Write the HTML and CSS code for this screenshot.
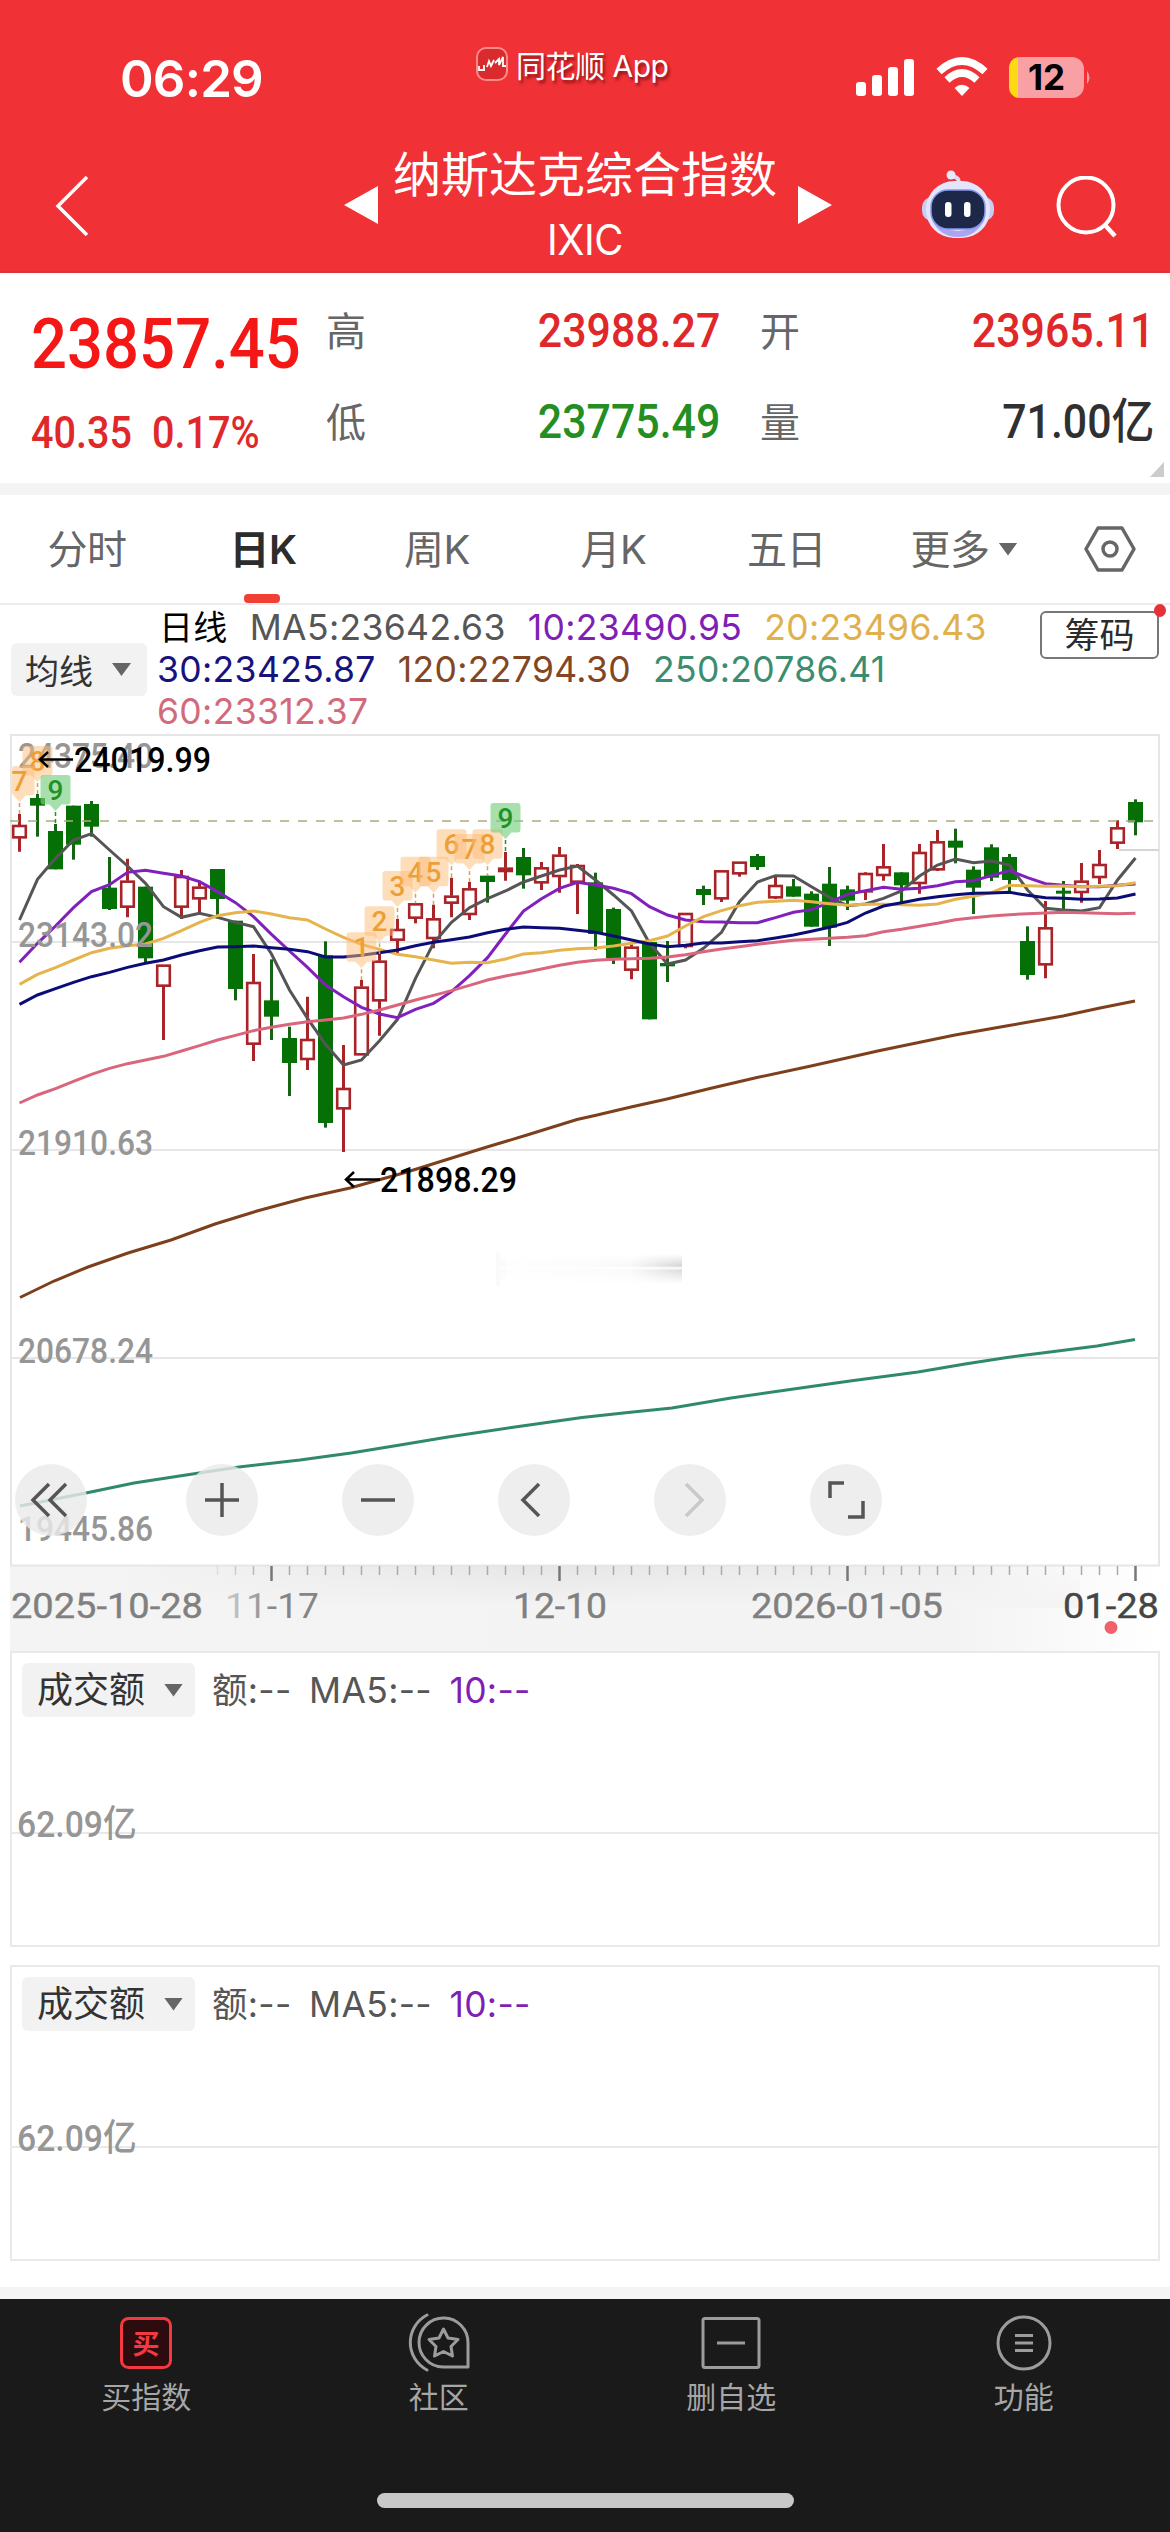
FILE: index.html
```html
<!DOCTYPE html>
<html lang="zh-CN">
<head>
<meta charset="utf-8">
<title>纳斯达克综合指数</title>
<link rel="stylesheet" href="styles.css">
</head>
<body>
<header class="top">
  <div class="status">
    <span class="time">06:29</span>
    <span class="app-tag">
      <svg width="32" height="34" viewBox="0 0 32 34"><rect x="1" y="1" width="30" height="32" rx="9" fill="#d92a2e" stroke="#ff8a8a" stroke-width="2"/><path d="M3 19v4h5v-5M11 20l2-6 2 5 3-6M19 16l4-4v6l4-8v9h3" fill="none" stroke="#fff" stroke-width="1.8"/></svg>
      <span>同花顺 App</span>
    </span>
    <svg class="status-icons" width="240" height="44" viewBox="0 0 240 44">
      <g fill="#fff"><rect x="0" y="26" width="10" height="14" rx="3"/><rect x="16" y="19" width="10" height="21" rx="3"/><rect x="32" y="11" width="10" height="29" rx="3"/><rect x="48" y="3" width="10" height="37" rx="3"/></g>
      <g fill="none" stroke="#fff" stroke-width="7.5"><path d="M83 15.500Q106 -5.500 129 15.500"/><path d="M91 24Q106 10 121 24"/></g>
      <path d="M98.500 32Q106 25.500 113.500 32L106 40Z" fill="#fff"/>
      <rect x="153" y="1" width="75" height="41" rx="12" fill="#f8a0a4"/>
      <path d="M162 1v41Q153 40 153 30V13Q153 3 162 1Z" fill="#fbd914"/>
      <path d="M231 15q5 6.500 0 13z" fill="#f8a0a4"/>
      <text x="190.500" y="34" text-anchor="middle" class="battery">12</text>
    </svg>
  </div>
  <div class="titlebar">
    <svg class="back" width="36" height="62" viewBox="0 0 36 62"><path d="M33 2L4 31L33 60" fill="none" stroke="#fff" stroke-width="3.500"/></svg>
    <div class="switcher">
      <svg width="34" height="38" viewBox="0 0 34 38"><path d="M34 0V38L0 19Z" fill="#fff"/></svg>
      <div class="names"><h1>纳斯达克综合指数</h1><span>IXIC</span></div>
      <svg width="34" height="38" viewBox="0 0 34 38"><path d="M0 0V38L34 19Z" fill="#fff"/></svg>
    </div>
    <svg class="robot" width="76" height="70" viewBox="0 0 76 70">
      <path d="M38 15Q41 7 31 6" fill="none" stroke="#d9dcf5" stroke-width="4"/><circle cx="31" cy="5" r="4.500" fill="#e8eaf8"/>
      <rect x="2" y="27" width="72" height="24" rx="10" fill="#c9cdf0"/>
      <rect x="6" y="11" width="64" height="57" rx="28" fill="#e3e5fa"/>
      <path d="M12 50Q20 67 38 67T65 49Q50 61 38 61T12 50Z" fill="#aaa5f0"/>
      <rect x="11" y="20" width="54" height="39" rx="17" fill="#1d2747" stroke="#8497ee" stroke-width="1.500"/>
      <rect x="25" y="32" width="6.500" height="15" rx="3" fill="#fff"/><rect x="44" y="32" width="6.500" height="15" rx="3" fill="#fff"/>
    </svg>
    <svg class="search" width="62" height="62" viewBox="0 0 62 62"><circle cx="30" cy="29" r="27.500" fill="none" stroke="#fff" stroke-width="4"/><path d="M48 48L59 60" stroke="#fff" stroke-width="4.500"/></svg>
  </div>
</header>

<section class="quote">
  <div class="last">
    <span class="num big">23857.45</span>
    <span class="chg"><span class="num">40.35</span><span class="num pct">0.17%</span></span>
  </div>
  <dl class="stats">
    <div><dt>高</dt><dd class="num red">23988.27</dd></div>
    <div><dt>开</dt><dd class="num red">23965.11</dd></div>
    <div><dt>低</dt><dd class="num green">23775.49</dd></div>
    <div><dt>量</dt><dd class="num dark">71.00亿</dd></div>
  </dl>
  <i class="corner"></i>
</section>

<nav class="tabs">
  <a>分时</a><a class="on">日K</a><a>周K</a><a>月K</a><a>五日</a>
  <a class="more">更多<i class="caret"></i></a>
  <svg width="52" height="46" viewBox="0 0 52 46"><path d="M14 2H38L50 23L38 44H14L2 23Z" fill="none" stroke="#666" stroke-width="3.500" stroke-linejoin="round"/><circle cx="26" cy="23" r="7" fill="none" stroke="#666" stroke-width="3.500"/></svg>
</nav>

<section class="legend">
  <button class="pick">均线<i class="caret"></i></button>
  <div class="ma">
    <p><b>日线</b><span class="c5">MA5:23642.63</span><span class="c10">10:23490.95</span><span class="c20">20:23496.43</span></p>
    <p><span class="c30">30:23425.87</span><span class="c120">120:22794.30</span><span class="c250">250:20786.41</span></p>
    <p><span class="c60">60:23312.37</span></p>
  </div>
  <button class="chips">筹码<i class="dot"></i></button>
</section>

<section class="chart">
  <svg id="plot" width="1170" height="917" viewBox="0 734 1170 917">
    <defs>
      <linearGradient id="band" x1="0" x2="1"><stop offset="0" stop-color="#f4f4f4"/><stop offset=".82" stop-color="#f3f3f3"/><stop offset="1" stop-color="#fff"/></linearGradient>
      <linearGradient id="bandTop" x1="0" x2="1"><stop offset="0" stop-color="#e6e6e6" stop-opacity="0"/><stop offset=".45" stop-color="#e6e6e6"/><stop offset="1" stop-color="#e6e6e6" stop-opacity="0"/></linearGradient>
      <linearGradient id="bandFade" x1="0" x2="0" y1="0" y2="1"><stop offset="0" stop-color="#f3f3f3" stop-opacity="0"/><stop offset="1" stop-color="#f4f4f4"/></linearGradient>
      <linearGradient id="smudge" x1="0" x2="1"><stop offset="0" stop-color="#888" stop-opacity=".01"/><stop offset=".7" stop-color="#888" stop-opacity=".05"/><stop offset="1" stop-color="#777" stop-opacity=".32"/></linearGradient>
      <linearGradient id="fade" x1="0" x2="0" y1="0" y2="1"><stop offset="0" stop-color="#fff"/><stop offset=".15" stop-color="#fff"/><stop offset=".45" stop-color="#fff" stop-opacity="0"/><stop offset=".5" stop-color="#fff"/><stop offset=".56" stop-color="#fff" stop-opacity=".2"/><stop offset=".9" stop-color="#fff"/><stop offset="1" stop-color="#fff"/></linearGradient>
      <linearGradient id="dateFade" gradientUnits="userSpaceOnUse" x1="226" x2="275" y1="0" y2="0"><stop offset="0" stop-color="#ccc"/><stop offset="1" stop-color="#858585"/></linearGradient>
    </defs>
    <rect x="10" y="1566" width="1150" height="85" fill="url(#band)"/>
    <rect x="120" y="1566" width="960" height="42" fill="url(#bandTop)"/>
    <rect x="120" y="1566" width="960" height="42" fill="url(#bandFade)"/>
    <g fill="none" stroke="#e6e6e6" stroke-width="2"><path d="M11 942H1159M11 1150H1159M11 1358H1159"/><rect x="11" y="735" width="1148" height="830.500"/></g>
    <path d="M1119 850H1159" stroke="#d5d5d5" stroke-width="2"/>
    <g id="series"></g>
    <g class="axis">
      <text x="18" y="768" textLength="135">24375.40</text><text x="18" y="946.500" textLength="135">23143.02</text>
      <text x="18" y="1154.500" textLength="135">21910.63</text><text x="18" y="1363" textLength="135">20678.24</text><text x="18" y="1541" textLength="135">19445.86</text>
    </g>
    <path d="M10 821H1158" stroke="#a9ad7d" stroke-width="1.500" stroke-dasharray="9 9"/>
    <g id="marks"></g>
    <g class="extreme"><text x="74" y="772" textLength="137">24019.99</text><text x="380" y="1191.500" textLength="137">21898.29</text></g>
    <g fill="none" stroke="#000" stroke-width="2.500"><path d="M73 759.500H40M48 752L40 759.500L48 767M380 1179.500H346M354 1172L346 1179.500L354 1187"/></g>
    <rect x="496" y="1252" width="10" height="34" fill="#fafafa"/><rect x="505" y="1250" width="177" height="36" fill="url(#smudge)"/><rect x="500" y="1248" width="184" height="40" fill="url(#fade)"/>
    <g id="ticks"></g>
    <g class="dates">
      <text x="11" y="1618" textLength="192">2025-10-28</text><text x="225" y="1618" textLength="94" class="faded">11-17</text><text x="513" y="1618" textLength="94">12-10</text><text x="751" y="1618" textLength="192">2026-01-05</text><text x="1063" y="1618" textLength="96" class="now">01-28</text>
    </g>
    <circle cx="1111" cy="1627.500" r="6.500" fill="#f0616a"/>
  </svg>
  <div class="tools">
    <svg viewBox="0 0 72 72"><path d="M34 20L18 36L34 52M51 20L35 36L51 52"/></svg>
    <svg viewBox="0 0 72 72"><path d="M36 19V53M19 36H53"/></svg>
    <svg viewBox="0 0 72 72"><path d="M19 36H53"/></svg>
    <svg viewBox="0 0 72 72"><path d="M41 20L25 36L41 52"/></svg>
    <svg viewBox="0 0 72 72" class="off"><path d="M32 20L48 36L32 52"/></svg>
    <svg viewBox="0 0 72 72"><path d="M34 19H20V34M38 53H53V37"/></svg>
  </div>
</section>

<section class="volume">
  <div class="vol-head"><button class="pick">成交额<i class="caret"></i></button><span class="c5">额:--</span><span class="c5">MA5:--</span><span class="c10">10:--</span></div>
  <div class="mid"><span class="num">62.09亿</span></div>
</section>
<section class="volume">
  <div class="vol-head"><button class="pick">成交额<i class="caret"></i></button><span class="c5">额:--</span><span class="c5">MA5:--</span><span class="c10">10:--</span></div>
  <div class="mid"><span class="num">62.09亿</span></div>
</section>

<footer class="bottom">
  <div class="items">
    <a><svg viewBox="0 0 64 60"><rect x="7.500" y="5.500" width="49" height="49" rx="7" fill="#2c0c0e" stroke="#f23a40" stroke-width="3"/><text x="32" y="40.500" text-anchor="middle" class="buy">买</text></svg>买指数</a>
    <a><svg viewBox="0 0 64 60"><g fill="none" stroke="#9c9c9c" stroke-width="3" stroke-linejoin="round" stroke-linecap="round"><path d="M20 2A31 31 0 0 0 20 57"/><path d="M61 54H36A24.500 24.500 0 1 1 61 30Z"/><path d="M36.500 16L41 25L51 26.500L44 33.500L45.500 43L36.500 38.500L27.500 43L29 33.500L22 26.500L32 25Z"/></g></svg>社区</a>
    <a><svg viewBox="0 0 64 60"><g fill="none" stroke="#9c9c9c" stroke-width="3"><rect x="4" y="5.500" width="56" height="49" rx="2"/><path d="M18 30H46"/></g></svg>删自选</a>
    <a><svg viewBox="0 0 64 60"><g fill="none" stroke="#9c9c9c" stroke-width="3"><circle cx="32" cy="30" r="26"/><path d="M23 22.500H41M23 30H41M23 37.500H41"/></g></svg>功能</a>
  </div>
  <i class="home"></i>
</footer>
<script src="chart.js"></script>
</body>
</html>
```
FILE: styles.css
```css
* { box-sizing: border-box; }
body { margin: 0; width: 1170px; height: 2532px; overflow: hidden; background: #fff; font-family: Inter, "Noto Sans CJK SC", sans-serif; color: #666; }
h1, p, dl, dd { margin: 0; font-weight: 400; }
button { border: 0; padding: 0; font: inherit; color: #333; }
svg { display: block; flex: none; }
.num { font-family: Roboto, "Noto Sans CJK SC", sans-serif; font-weight: 500; display: inline-block; transform: scaleX(.893); transform-origin: left; white-space: nowrap; }

.top { height: 273px; background: #f03136; color: #fff; border-bottom: 2px solid #dc3338; }
.status { display: flex; height: 140px; padding-left: 120px; }
.time { width: 356px; font-size: 51px; font-weight: 600; line-height: 157px; letter-spacing: -.8px; }
.app-tag { display: flex; gap: 8px; width: 380px; height: 38px; margin-top: 47px; font-size: 30px; line-height: 39px; text-shadow: 2px 3px 3px rgba(80, 0, 0, .6); letter-spacing: -.5px; }
.status-icons { margin-top: 56px; }
.battery { font: 700 35px Inter, sans-serif; fill: #000; }
.titlebar { display: flex; height: 131px; padding-left: 54px; }
.back { margin-top: 35px; }
.switcher { display: flex; gap: 16px; margin-left: 254px; }
.switcher > svg { margin-top: 46px; }
.names { width: 388px; text-align: center; white-space: nowrap; }
.names h1 { font-size: 48px; line-height: 69px; margin-left: -6px; font-weight: 400; }
.names span { display: block; font-size: 42px; line-height: 60px; margin: 1px 6px 0 0; letter-spacing: -.5px; transform: scaleX(.95); }
.robot { margin: 30px 0 0 88px; }
.search { margin: 36px 0 0 60px; }

.quote { position: relative; display: flex; height: 222px; border-bottom: 12px solid #f4f4f4; padding-left: 31px; }
.last { width: 295px; color: #e0282a; }
.big { font-size: 71px; line-height: 84px; margin-top: 29px; color: #f51616; }
.chg { display: flex; margin-top: 23px; font-size: 43.500px; line-height: 50px; height: 50px; }
.chg .num { width: 121px; transform: scaleX(.91); }
.stats { display: grid; grid-template-columns: 394px 392px; column-gap: 40px; grid-auto-rows: 91px; padding-top: 14px; }
.stats div { display: flex; justify-content: space-between; line-height: 91px; }
.stats dt { font-size: 40px; line-height: 90px; }
.stats dd { font-size: 48px; line-height: 88px; transform-origin: right; }
.stats div:nth-child(even) dd { margin-right: -2px; }
.red { color: #e0282a; }
.green { color: #248e22; }
.dark { color: #303030; }
.corner { position: absolute; right: 6px; bottom: 6px; width: 14px; height: 15px; background: #ccc; clip-path: polygon(100% 0, 100% 100%, 0 100%); }

.tabs { display: grid; grid-template-columns: 174px 178px 170px 183px 163px 192px 1fr; align-items: center; height: 110px; border-bottom: 2px solid #ececec; font-size: 40px; text-align: center; }
.tabs a { line-height: 109px; height: 108px; letter-spacing: -.5px; }
.tabs > svg { margin-left: 24px; }
.tabs .on { position: relative; color: #2c2c2c; font-weight: 600; }
.on::after { content: ""; position: absolute; left: 70px; bottom: 0; width: 36px; height: 9px; border-radius: 4px; background: #f04034; }
.tabs .more { display: flex; align-items: center; justify-content: center; gap: 9px; }
.caret { display: inline-block; width: 19px; height: 13px; background: #666; clip-path: polygon(0 0, 100% 0, 50% 100%); }

.legend { display: flex; height: 129px; padding-left: 11px; }
.pick { display: flex; align-items: center; justify-content: space-between; background: #f2f2f2; border-radius: 6px; white-space: nowrap; }
.legend .pick { width: 136px; height: 53px; margin-top: 38px; padding: 0 16px 0 14px; font-size: 34px; }
.ma { width: 893px; padding-left: 10px; font-size: 35.500px; line-height: 42px; }
.ma p { display: flex; gap: 22px; height: 42px; padding-top: 2px; letter-spacing: .35px; white-space: nowrap; }
.ma b { font-size: 34px; font-weight: 400; color: #000; margin-left: 2px; }
.c5 { color: #565656; } .c10 { color: #7f1fb5; } .c20 { color: #e0b04c; } .c30 { color: #16127e; }
.c120 { color: #844622; } .c250 { color: #3c8d70; } .c60 { color: #d26a7c; }
.chips { position: relative; width: 119px; height: 48px; margin-top: 6px; background: #fff; border: 2px solid #777; border-radius: 6px; font-size: 35px; line-height: 42px; color: #2b2b2b; }
.dot { position: absolute; right: -9px; top: -9px; width: 12px; height: 13px; border-radius: 50%; background: #e6303a; }

.chart { position: relative; height: 917px; }
.chart text { font-family: Roboto, sans-serif; font-size: 35px; font-weight: 500; }
.axis text { fill: #969696; }
.extreme text { fill: #000; }
.dates text { fill: #808080; font-weight: 400; stroke: #808080; stroke-width: .4; }
.dates .faded { fill: url(#dateFade); stroke: none; }
.dates .now { fill: #454545; stroke: #454545; }
#marks text { font-size: 28px; }
.tools { position: absolute; left: 15px; top: 730px; display: flex; gap: 84px; }
.tools svg { width: 72px; height: 72px; border-radius: 50%; background: rgba(234, 234, 234, .82); fill: none; stroke: #555; stroke-width: 3.500; }
.tools svg:first-child { margin-right: 15px; }
.tools .off { stroke: #c9c9c9; }

.volume { height: 296px; margin: 0 10px 18px; border: 2px solid #e9e9e9; }
.vol-head { display: flex; height: 64px; padding: 10px 0 0 10px; font-size: 35.500px; line-height: 56px; }
.vol-head span { white-space: nowrap; margin-right: 17.500px; letter-spacing: .3px; }
.vol-head .pick { width: 173px; height: 54px; padding: 0 12px 0 15px; margin-right: 17px; font-size: 36px; }
.mid { height: 117px; border-bottom: 2px solid #e9e9e9; padding: 85px 0 0 5px; font-size: 37px; line-height: 44px; }
.mid .num { position: relative; color: #969696; transform: scaleX(.91); }

.bottom { height: 245px; margin-top: 26px; border-top: 12px solid #f4f4f4; background: #1a1a1a; color: #a6a6a6; }
.items { display: grid; grid-template-columns: repeat(4, 1fr); height: 194px; padding-top: 14px; }
.items a { display: flex; flex-direction: column; align-items: center; font-size: 30px; line-height: 44px; gap: 2px; }
.items svg { width: 64px; height: 60px; }
.buy { font: 700 27px "Noto Sans CJK SC", sans-serif; fill: #f23a40; }
.home { display: block; width: 417px; height: 15px; margin: 0 auto; border-radius: 8px; background: #c8c8c8; }
```
FILE: chart.js
```js
// Vertical values are thirds of a pixel below y = 730.
const X = i => 19.5 + 18 * i;
const Y = v => 730 + v / 3;
const el = (parent, tag, attrs, text) => {
  const n = document.createElementNS('http://www.w3.org/2000/svg', tag);
  for (const k in attrs) n.setAttribute(k, attrs[k]);
  if (text) n.textContent = text;
  parent.appendChild(n);
  return n;
};
document.querySelectorAll('#plot text').forEach(t => t.setAttribute('lengthAdjust', 'spacingAndGlyphs'));

// direction, high, body top, body bottom, low
const candles = `R 252 285 322 365|G 192 204 227 320|G 282 303 418 418|G 227 227 344 389|G 213 222 290 320|G 381 473 537 540|R 386 452 530 562|G 470 470 685 700|R 704 704 767 930|R 420 438 530 567|R 452 470 505 548|G 417 417 507 565|G 572 572 777 811|R 672 756 941 993|G 688 811 860 930|G 890 924 999 1098|R 800 927 987 1020|G 634 676 1179 1193|R 945 1074 1135 1266|R 750 770 973 973|R 672 692 811 917|R 567 597 629 670|R 520 520 563 580|R 524 565 624 655|R 443 497 518 562|R 456 475 552 570|G 437 437 456 518|R 366 413 423 452|G 354 381 436 476|R 396 412 457 480|R 351 374 438 488|R 402 405 455 552|G 428 457 612 660|G 533 537 684 702|R 643 650 719 748|G 630 636 868 868|G 633 699 709 756|R 549 549 648 655|G 467 477 495 525|R 421 421 505 516|R 395 395 430 440|G 372 378 411 420|R 436 465 502 507|G 447 469 500 500|G 484 491 590 590|G 411 461 593 648|G 467 478 512 540|R 427 429 484 510|R 342 409 435 452|G 427 427 466 516|R 342 366 459 491|R 300 334 418 423|G 296 332 353 400|G 409 419 473 552|G 343 352 443 453|G 372 381 450 485|G 589 633 735 749|R 513 592 703 745|G 453 482 491 540|R 399 452 486 518|R 360 402 441 462|R 271 292 338 357|G 208 216 277 316`.split('|').map(r => r.split(' '));
const series = document.getElementById('series');
candles.forEach(([dir, ...v], i) => {
  const [hi, top, bot, lo] = v.map(n => Y(+n));
  const x = X(i);
  if (dir === 'G') {
    el(series, 'path', { d: `M${x} ${hi}V${lo}`, stroke: '#146414', 'stroke-width': 3 });
    el(series, 'rect', { x: x - 7.5, y: top, width: 15, height: bot - top, fill: '#057005' });
  } else {
    el(series, 'path', { d: `M${x} ${hi}V${top}M${x} ${bot}V${lo}`, stroke: '#a82428', 'stroke-width': 3 });
    el(series, 'rect', { x: x - 6.3, y: top + 1, width: 12.6, height: Math.max(bot - top - 1, 1), fill: 'none', stroke: '#a82428', 'stroke-width': 2.6 });
  }
});

const averages = {
  '#555': '570 448 385 330 311 360 408 460 530 562 550 562 577 590 672 780 865 943 1005 990 932 868 745 640 577 533 506 483 456 438 420 408 450 495 543 640 702 690 655 607 515 456 437 438 470 502 527 522 505 483 438 405 387 398 393 405 480 535 540 543 533 450 384',
  '#8120bd': '697 640 588 533 485 464 427 421 430 438 455 485 518 560 613 663 712 765 800 832 852 863 838 820 785 737 683 612 543 506 475 457 465 475 491 530 555 570 575 576 578 578 563 547 539 517 493 482 472 478 475 467 455 452 437 422 443 461 466 470 470 466 462',
  '#e5b44d': '763 733 713 690 668 655 647 642 625 602 577 557 548 543 552 563 570 597 622 643 658 673 680 690 700 697 698 687 672 668 661 656 654 648 640 632 618 588 560 542 527 517 514 511 515 521 526 523 523 524 526 522 508 499 488 466 467 469 468 470 469 467 458',
  '#0c0c76': '823 795 776 757 740 727 712 700 690 675 662 651 650 648 653 658 665 681 681 676 668 660 647 637 629 621 608 598 591 593 595 601 607 618 630 642 650 646 639 639 635 632 624 615 604 592 577 549 528 518 508 500 494 490 489 487 496 503 505 508 507 504 492',
  '#da667d': '1119 1095 1076 1054 1033 1015 1001 990 979 963 947 930 916 902 892 883 875 870 864 853 840 825 810 796 782 766 750 738 728 717 706 697 691 688 686 685 681 674 665 657 650 643 637 631 628 625 622 617 605 598 589 580 569 563 558 554 551 549 547 548 550 551 550'
};
const line = (color, points) => el(series, 'polyline', { points, fill: 'none', stroke: color, 'stroke-width': 3 });
for (const color in averages) line(color, averages[color].split(' ').map((v, i) => `${X(i)},${Y(+v)}`).join(' '));
line('#7d3f1c', '20,1297.5 54,1281 88,1267 128,1253 171,1240 215,1224 257,1211 305,1198 350,1188 407,1172 447,1159.5 487,1147 527,1135 577,1119.5 595,1115.5 631,1107 667,1099 712,1088 757,1077.500 811,1066 880,1050.5 955,1035 1009,1025.5 1063,1016 1100,1008 1135,1001');
line('#308a6a', '20,1506 86,1493 134,1483 186,1475 239,1467 300,1460 351,1453 400,1445 448,1437 515,1427 582,1417.500 628,1412.5 672,1408 731,1398 790,1389.5 850,1381 918,1372 965,1364 1007,1357.500 1050,1352 1097,1346 1135,1339.500');

// candle index, digit, top of the flag
const marks = document.getElementById('marks');
[[1, 8, 48], [0, 7, 108], [2, 9, 135], [19, 1, 607], [20, 2, 529], [21, 3, 423], [22, 4, 380], [23, 5, 380], [24, 6, 298], [25, 7, 312], [26, 8, 298], [27, 9, 219]].forEach(([i, digit, top]) => {
  const x = X(i), y = Y(top), green = digit === 9;
  const left = Math.max(x - 15, 12);
  const flag = green ? '#78cf80' : '#fdbc75';
  const ink = green ? '#219326' : '#ed9f37';
  el(marks, 'path', { d: `M${left + 3} ${y}H${x + 12}Q${x + 15} ${y} ${x + 15} ${y + 3}V${y + 26}Q${x + 15} ${y + 29.5} ${x + 12} ${y + 29.5}H${x + 6}L${x} ${y + 36}L${x - 6} ${y + 29.5}H${left + 3}Q${left} ${y + 29.5} ${left} ${y + 26}V${y + 3}Q${left} ${y} ${left + 3} ${y}Z`, fill: flag, 'fill-opacity': green ? .65 : .5 });
  el(marks, 'path', { d: `M${x} ${y + 37}V${Y(+candles[i][1])}`, stroke: green ? '#219326' : '#d2a25e', 'stroke-width': 1.5, 'stroke-dasharray': '4 3' });
  el(marks, 'text', { x, y: y + 25, fill: ink, 'text-anchor': 'middle' }, String(digit));
});

const ticks = document.getElementById('ticks');
for (let i = 11; i <= 62; i++) {
  const major = i % 16 === 14;
  el(ticks, 'path', { d: `M${X(i)} 1566V${major ? 1581 : 1575}`, stroke: major ? '#777' : '#aaa', 'stroke-width': major ? 2.5 : 1.5, opacity: i < 14 ? (i - 10) * .25 : 1 });
}
```
